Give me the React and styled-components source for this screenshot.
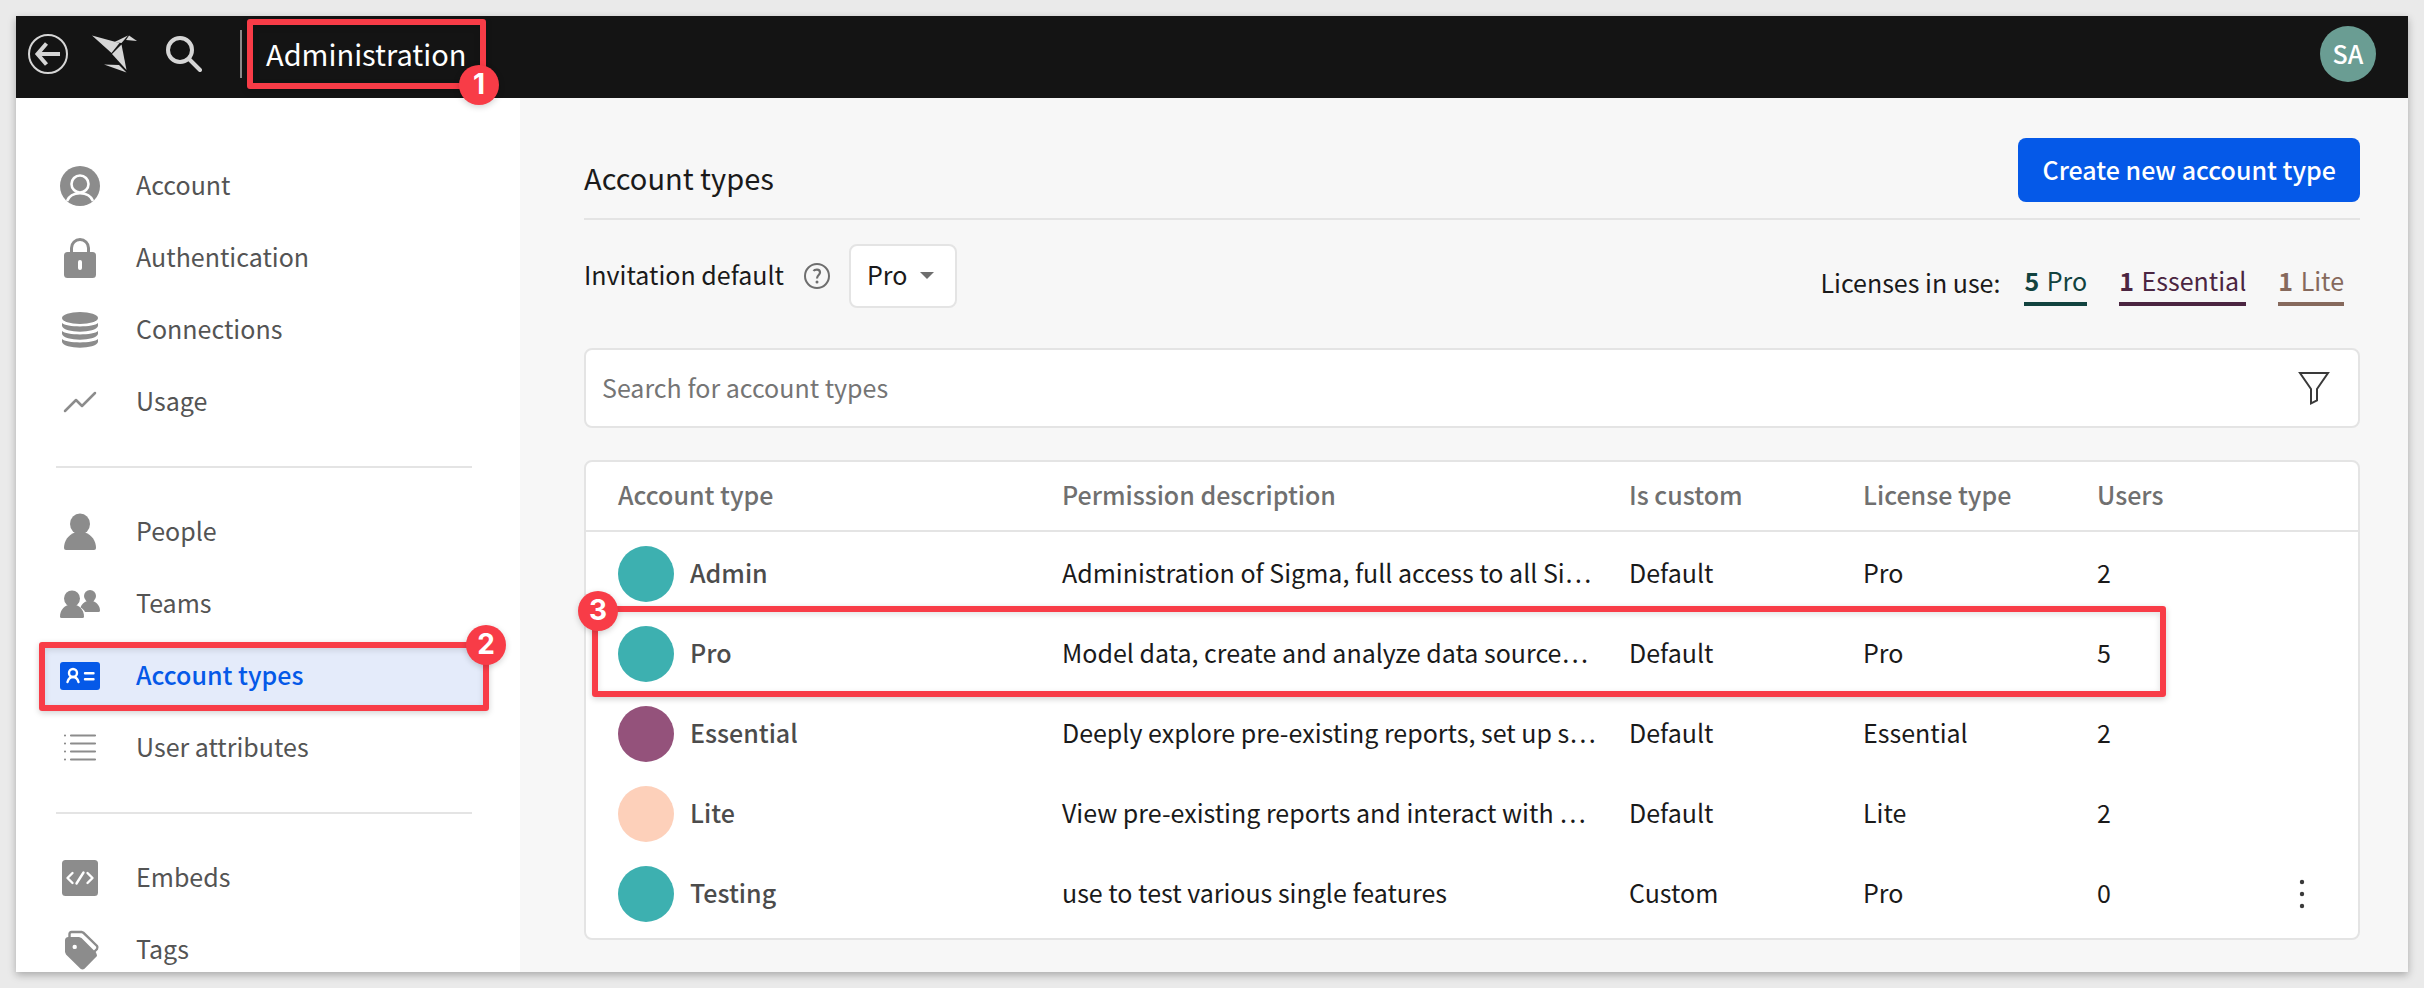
import React from "react";
import styled, { createGlobalStyle } from "styled-components";

const ink = "#1a1a1a";
const line = "#e4e4e4";
const blue = "#0559e8";
const red = "#f83c47";

const GlobalStyle = createGlobalStyle`
  *, *::before, *::after { box-sizing: border-box; }
  body {
    margin: 0;
    background: #eaeaea;
    color: ${ink};
    font-family: "Noto Sans CJK SC", "Open Sans", sans-serif;
    font-size: 25px;
    line-height: 36px;
  }
  button, input, select { font: inherit; color: inherit; }
`;

const Page = styled.div`
  height: 100vh;
  padding: 16px;
`;

const Frame = styled.div`
  display: flex;
  flex-direction: column;
  height: 100%;
  overflow: hidden;
  background: #f7f7f7;
`;

const Shadow = styled.div`
  height: 100%;
  box-shadow: 0 3px 8px rgba(0, 0, 0, 0.28);
`;

const TopBar = styled.header`
  display: flex;
  align-items: center;
  flex: none;
  height: 82px;
  padding: 0 32px 6px 12px;
  background: #141414;
  color: #d6d6d6;
`;

const BarButton = styled.button`
  display: flex;
  margin: 0 24px 0 0;
  padding: 0;
  border: 0;
  background: none;
  color: inherit;
`;

const BarTitle = styled.div`
  position: relative;
  margin-left: 14px;
  padding: 0 24px 2px;
  border-left: 2px solid #8a8a8a;
  color: #fff;
  font-size: 29px;
  line-height: 46px;
`;

const Avatar = styled.button`
  width: 56px;
  height: 56px;
  margin-left: auto;
  padding: 0 0 3px;
  border: 0;
  border-radius: 50%;
  background: #6a9d93;
  color: #fff;
  font-weight: 500;
`;

const Callout = styled.span`
  position: absolute;
  inset: ${(p) => p.$inset};
  border: 6px solid ${red};
  border-radius: 3px;
  box-shadow: 0 2px 6px rgba(0, 0, 0, 0.18), inset 0 2px 6px rgba(0, 0, 0, 0.12);
  pointer-events: none;
`;

const Step = styled.span`
  position: absolute;
  top: ${(p) => p.$top};
  left: ${(p) => p.$left};
  width: 40px;
  height: 40px;
  border-radius: 50%;
  background: ${red};
  box-shadow: 0 2px 6px rgba(0, 0, 0, 0.18);
  color: #fff;
  font: 700 28px/39px Inter, sans-serif;
  text-align: center;
`;

const Body = styled.div`
  display: flex;
  flex: 1;
  min-height: 0;
`;

const Sidebar = styled.nav`
  flex: none;
  width: 504px;
  padding: 56px 32px 0 24px;
  background: #fff;
`;

const NavGroup = styled.ul`
  display: flex;
  flex-direction: column;
  gap: 8px;
  margin: 0;
  padding: 0;
  list-style: none;

  & + & {
    margin-top: 32px;
    position: relative;
    padding-top: 34px;
  }
  & + &::before {
    content: "";
    position: absolute;
    top: 0;
    left: 16px;
    right: 16px;
    height: 2px;
    background: ${line};
  }
`;

const NavItem = styled.li`
  position: relative;
`;

const NavLink = styled.a`
  display: flex;
  align-items: center;
  gap: 36px;
  height: 64px;
  padding-left: 20px;
  background: ${(p) => (p.$active ? "#e4ebfa" : "none")};
  color: ${(p) => (p.$active ? blue : "#545454")};
  font-weight: ${(p) => (p.$active ? 500 : 400)};
  text-decoration: none;

  svg { color: ${(p) => (p.$active ? blue : "#8c8c8c")}; }
`;

const Label = styled.span`
  padding-bottom: 4px;
`;

const Main = styled.main`
  flex: 1;
  min-width: 0;
  padding: 40px 48px 0 64px;
`;

const TitleRow = styled.div`
  display: flex;
  align-items: center;
  justify-content: space-between;
  padding-bottom: 16px;
  border-bottom: 2px solid ${line};
`;

const Title = styled.h1`
  margin: 14px 0 0;
  font-size: 29px;
  font-weight: 400;
  line-height: 40px;
`;

const CreateButton = styled.button`
  height: 64px;
  padding: 0 24px 3px;
  border: 0;
  border-radius: 8px;
  background: ${blue};
  color: #fff;
  font-weight: 500;
`;

const OptionsRow = styled.div`
  display: flex;
  align-items: center;
  justify-content: space-between;
  margin: 24px 0 40px;
`;

const Invitation = styled.div`
  display: flex;
  align-items: center;
`;

const HelpButton = styled.button`
  display: flex;
  margin: 0 18px 0 19px;
  padding: 0;
  border: 0;
  background: none;
  color: #6e6e6e;
`;

const SelectWrap = styled.span`
  position: relative;
  display: flex;

  svg {
    position: absolute;
    top: 28px;
    right: 23px;
    pointer-events: none;
  }
`;

const Select = styled.select`
  width: 108px;
  height: 64px;
  padding: 0 16px 4px;
  border: 2px solid ${line};
  border-radius: 8px;
  background: #fff;
  appearance: none;
`;

const Licenses = styled.div`
  display: flex;
  align-items: center;
  gap: 32px;
  padding: 16px 16px 0 0;
`;

const LicensesLabel = styled.span`
  margin-right: -8px;
  padding-bottom: 4px;
`;

const License = styled.span`
  padding-bottom: 4px;
  border-bottom: 4px solid currentColor;
  color: ${(p) => p.$color};

  b { font-weight: 600; margin-right: 2px; }
`;

const SearchBox = styled.div`
  display: flex;
  align-items: center;
  height: 80px;
  margin-bottom: 32px;
  padding: 0 28px 0 16px;
  border: 2px solid ${line};
  border-radius: 8px;
  background: #fff;
`;

const SearchInput = styled.input`
  flex: 1;
  min-width: 0;
  padding: 0 0 2px;
  border: 0;
  outline: 0;
  background: none;

  &::placeholder { color: #757575; opacity: 1; }
`;

const IconButton = styled.button`
  display: inline-flex;
  padding: 0;
  border: 0;
  background: none;
  color: #3a3a3a;
  vertical-align: middle;
`;

const Card = styled.div`
  padding-bottom: 4px;
  border: 2px solid ${line};
  border-radius: 8px;
  background: #fff;
`;

const Table = styled.table`
  width: 100%;
  border-spacing: 0;
  table-layout: fixed;
  text-align: left;

  tbody::before {
    content: "";
    display: block;
    height: 2px;
  }
`;

const HeadCell = styled.th`
  width: ${(p) => p.$width};
  height: 70px;
  padding: 0 16px 4px;
  border-bottom: 2px solid ${line};
  color: #707070;
  font-weight: 500;

  &:first-child { padding-left: 32px; }
`;

const Row = styled.tr`
  position: relative;
`;

const Cell = styled.td`
  height: 80px;
  padding: 0 16px 4px;
  white-space: nowrap;
`;

const NameCell = styled.th`
  height: 80px;
  padding: 0 16px 0 32px;
  color: #4c4c4c;
  font-weight: 500;
`;

const Name = styled.div`
  display: flex;
  align-items: center;
  gap: 16px;
`;

const Dot = styled.span`
  width: 56px;
  height: 56px;
  border-radius: 50%;
  background: ${(p) => p.$color};
`;

const LastCell = styled.div`
  display: flex;
  align-items: center;
  justify-content: space-between;
  padding-right: 20px;
`;

const Icon = ({ size = 40, children }) => (
  <svg width={size} height={size} viewBox={`0 0 ${size} ${size}`} fill="currentColor" aria-hidden="true">
    {children}
  </svg>
);

const icons = {
  back: (
    <Icon>
      <circle cx="20" cy="20" r="19" fill="none" stroke="currentColor" strokeWidth="2" />
      <path d="M32 20H10M18.500 9.500L9.500 20l9 10.500" fill="none" stroke="currentColor" strokeWidth="4" />
    </Icon>
  ),
  logo: (
    <svg width="46" height="40" viewBox="0 0 46 40" fill="currentColor" aria-hidden="true">
      <path d="M0 1.500L27.500 9L19.500 19Z" />
      <path d="M22 8.200L36 1.500L29.500 9Z" />
      <path d="M37 1.500L45 7L34 6Z" />
      <path d="M20 20L29.500 10.500L34.500 36Z" />
      <path d="M12 30.500L27 31L34.500 38.500Z" />
    </svg>
  ),
  search: (
    <Icon>
      <circle cx="18" cy="16" r="12" fill="none" stroke="currentColor" strokeWidth="4" />
      <path d="M27 25l11 11" fill="none" stroke="currentColor" strokeWidth="4" strokeLinecap="round" />
    </Icon>
  ),
  account: (
    <Icon>
      <circle cx="20" cy="20" r="20" />
      <circle cx="20" cy="18" r="8.500" fill="none" stroke="#fff" strokeWidth="2.600" />
      <path d="M7 35C9 30 14 27.200 20 27.200S31 30 33 35" fill="none" stroke="#fff" strokeWidth="2.600" />
    </Icon>
  ),
  lock: (
    <Icon>
      <path d="M11.500 16V10a8.500 8.500 0 0 1 17 0v6" fill="none" stroke="currentColor" strokeWidth="3" />
      <rect x="4" y="14" width="32" height="26" rx="3.500" />
      <rect x="18" y="22" width="4" height="10" rx="2" fill="#fff" />
    </Icon>
  ),
  database: (
    <Icon>
      <ellipse cx="20" cy="8" rx="18" ry="6" />
      <path d="M2 13C6 17.500 34 17.500 38 13V16C36 23.500 4 23.500 2 16Z" />
      <path d="M2 21C6 25.500 34 25.500 38 21V24C36 31.500 4 31.500 2 24Z" />
      <path d="M2 29C6 33.500 34 33.500 38 29V32C36 39.500 4 39.500 2 32Z" />
    </Icon>
  ),
  usage: (
    <Icon>
      <path d="M5 29L16 18L22 24L35 11" fill="none" stroke="currentColor" strokeWidth="2.500" strokeLinecap="round" strokeLinejoin="round" />
    </Icon>
  ),
  person: (
    <Icon>
      <ellipse cx="20" cy="12" rx="10" ry="10.500" />
      <path d="M15 20.500h10C32 23 36 29 36 36q0 2-2 2H6q-2 0-2-2C4 29 8 23 15 20.500Z" />
    </Icon>
  ),
  team: (
    <Icon>
      <circle cx="12" cy="14.500" r="8" />
      <path d="M8 21h8c5 2 8 6 8 11.500q0 1.500-1.500 1.500h-21Q0 34 0 32.500C0 27 3 23 8 21Z" />
      <circle cx="30" cy="12" r="6" />
      <path d="M27 17h6c4 1.500 7 5 7 9.500q0 1.500-1.500 1.500H25c-1-2-2.500-3.500-4.500-4.500 1-3 3.500-5.500 6.500-6.500Z" />
    </Icon>
  ),
  idCard: (
    <Icon>
      <rect y="6" width="40" height="28" rx="3" />
      <circle cx="13" cy="17" r="4" fill="none" stroke="#fff" strokeWidth="2.400" />
      <path d="M7.500 26C8.500 22.500 10 21 13 21s4.500 1.500 5.500 5M25 17.200h8.500M25 23.200h8.500" fill="none" stroke="#fff" strokeWidth="2.400" strokeLinecap="round" />
    </Icon>
  ),
  list: (
    <Icon>
      <path d="M11 7.500h24M11 15.500h24M11 23.500h24M11 31.500h24M5 7.500h0M5 15.500h0M5 23.500h0M5 31.500h0" fill="none" stroke="currentColor" strokeWidth="2.200" strokeLinecap="round" />
    </Icon>
  ),
  code: (
    <Icon>
      <rect x="2" y="2" width="36" height="36" rx="3.500" />
      <path d="M12.500 15l-5 5 5 5M27.500 15l5 5-5 5M23.500 14.500l-7 11" fill="none" stroke="#fff" strokeWidth="2.400" strokeLinecap="round" strokeLinejoin="round" />
    </Icon>
  ),
  tags: (
    <Icon>
      <path d="M9.500 7V4q0-2 2-2h10l2 .8L37 16q1 1.500 0 3l-3 3" fill="none" stroke="currentColor" strokeWidth="2.400" />
      <path fillRule="evenodd" d="M8.500 7H19l2.500 1L36 22.500q1 2 1 3.500L24.500 38.800q-2 1.500-4 0L6 24.500 5 22V10.500Q5 7 8.500 7ZM14.700 14.700a2.200 2.200 0 1 0 .01 4.400a2.200 2.200 0 1 0-.01-4.400Z" />
    </Icon>
  ),
};

const groups = [
  [["Account", "account"], ["Authentication", "lock"], ["Connections", "database"], ["Usage", "usage"]],
  [["People", "person"], ["Teams", "team"], ["Account types", "idCard"], ["User attributes", "list"]],
  [["Embeds", "code"], ["Tags", "tags"]],
];

const rows = [
  { name: "Admin", color: "#3db0b0", text: "Administration of Sigma, full access to all Si…", custom: "Default", license: "Pro", users: 2 },
  { name: "Pro", color: "#3db0b0", text: "Model data, create and analyze data source…", custom: "Default", license: "Pro", users: 5, step: 3 },
  { name: "Essential", color: "#94527b", text: "Deeply explore pre-existing reports, set up s…", custom: "Default", license: "Essential", users: 2 },
  { name: "Lite", color: "#fdd0ba", text: "View pre-existing reports and interact with …", custom: "Default", license: "Lite", users: 2 },
  { name: "Testing", color: "#3db0b0", text: "use to test various single features", custom: "Custom", license: "Pro", users: 0, menu: true },
];

export default function App() {
  return (
    <Page>
      <GlobalStyle />
      <Shadow>
        <Frame>
          <TopBar>
            <BarButton aria-label="Back">{icons.back}</BarButton>
            <BarButton aria-label="Home">{icons.logo}</BarButton>
            <BarButton aria-label="Search">{icons.search}</BarButton>
            <BarTitle>
              Administration
              <Callout $inset="-11px 5px -11px 5px" />
              <Step $top="35px" $left="217px">1</Step>
            </BarTitle>
            <Avatar aria-label="User menu">SA</Avatar>
          </TopBar>
          <Body>
            <Sidebar>
              {groups.map((items) => (
                <NavGroup key={items[0][0]}>
                  {items.map(([label, icon]) => {
                    const active = label === "Account types";
                    return (
                      <NavItem key={label}>
                        <NavLink href="#" $active={active}>
                          {icons[icon]}
                          <Label>{label}</Label>
                        </NavLink>
                        {active && <Callout $inset="-2px -1px -3px" />}
                        {active && <Step $top="-19px" $left="426px">2</Step>}
                      </NavItem>
                    );
                  })}
                </NavGroup>
              ))}
            </Sidebar>
            <Main>
              <TitleRow>
                <Title>Account types</Title>
                <CreateButton>Create new account type</CreateButton>
              </TitleRow>
              <OptionsRow>
                <Invitation>
                  <Label as="label" htmlFor="invite">Invitation default</Label>
                  <HelpButton aria-label="Help">
                    <svg width="28" height="28" viewBox="0 0 28 28" fill="none" stroke="currentColor" strokeWidth="2" aria-hidden="true">
                      <circle cx="14" cy="14" r="12" />
                      <path d="M10.500 9c1-1.500 6.500-2.500 6.500 1.500 0 2.500-3 2.500-3 6" strokeWidth="2.200" />
                      <circle cx="14" cy="20" r="1.500" fill="currentColor" stroke="none" />
                    </svg>
                  </HelpButton>
                  <SelectWrap>
                    <Select id="invite" defaultValue="Pro">
                      <option>Pro</option>
                    </Select>
                    <svg width="14" height="8" viewBox="0 0 14 8" fill="#6e6e6e" aria-hidden="true">
                      <path d="M0 0h14L7 7Z" />
                    </svg>
                  </SelectWrap>
                </Invitation>
                <Licenses>
                  <LicensesLabel>Licenses in use:</LicensesLabel>
                  <License $color="#12433f"><b>5</b> Pro</License>
                  <License $color="#4b2541"><b>1</b> Essential</License>
                  <License $color="#86695c"><b>1</b> Lite</License>
                </Licenses>
              </OptionsRow>
              <SearchBox>
                <SearchInput aria-label="Search for account types" placeholder="Search for account types" />
                <IconButton aria-label="Filter">
                  <svg width="32" height="36" viewBox="0 0 32 36" fill="none" stroke="currentColor" strokeWidth="2" aria-hidden="true">
                    <path d="M2 3H30L19 19V30.500L13 33.500V19Z" />
                  </svg>
                </IconButton>
              </SearchBox>
              <Card>
                <Table>
                  <thead>
                    <tr>
                      <HeadCell scope="col">Account type</HeadCell>
                      <HeadCell scope="col" $width="32%">Permission description</HeadCell>
                      <HeadCell scope="col" $width="234px">Is custom</HeadCell>
                      <HeadCell scope="col" $width="234px">License type</HeadCell>
                      <HeadCell scope="col" $width="277px">Users</HeadCell>
                    </tr>
                  </thead>
                  <tbody>
                    {rows.map((r) => (
                      <Row key={r.name}>
                        <NameCell scope="row">
                          <Name><Dot $color={r.color} /><Label>{r.name}</Label></Name>
                          {r.step && <Callout $inset="-8px 192px -3px 6px" />}
                          {r.step && <Step $top="-23px" $left="-8px">{r.step}</Step>}
                        </NameCell>
                        <Cell>{r.text}</Cell>
                        <Cell>{r.custom}</Cell>
                        <Cell>{r.license}</Cell>
                        <Cell>
                          <LastCell>
                            {r.users}
                            {r.menu && (
                              <IconButton aria-label="More actions">
                                <Icon>
                                  <circle cx="20" cy="10" r="2.200" />
                                  <circle cx="20" cy="22" r="2.200" />
                                  <circle cx="20" cy="34" r="2.200" />
                                </Icon>
                              </IconButton>
                            )}
                          </LastCell>
                        </Cell>
                      </Row>
                    ))}
                  </tbody>
                </Table>
              </Card>
            </Main>
          </Body>
        </Frame>
      </Shadow>
    </Page>
  );
}
